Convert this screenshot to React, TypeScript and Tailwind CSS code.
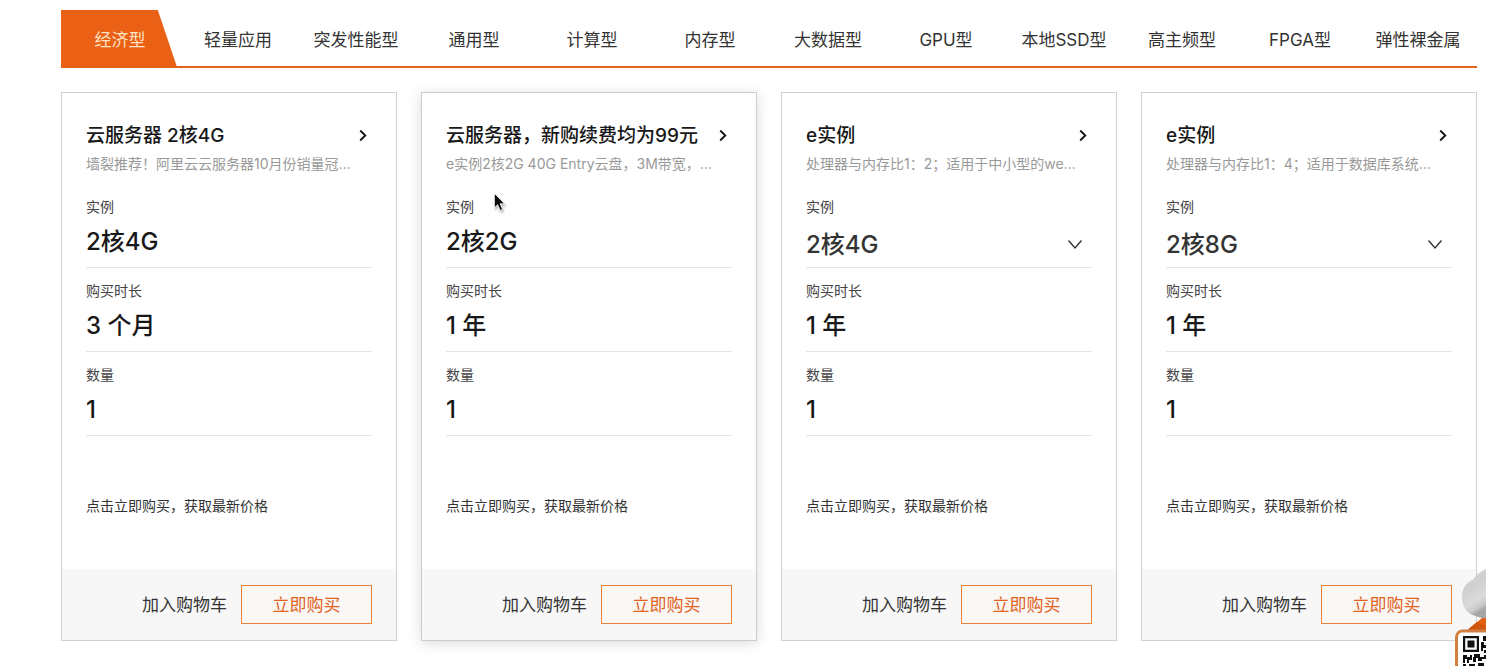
import React, { useId, useState } from "react";

const tabs = [
  "经济型",
  "轻量应用",
  "突发性能型",
  "通用型",
  "计算型",
  "内存型",
  "大数据型",
  "GPU型",
  "本地SSD型",
  "高主频型",
  "FPGA型",
  "弹性裸金属",
];

type Product = {
  title: string;
  desc: string;
  spec: string;
  selectable?: boolean;
  period: string;
  raised?: boolean;
};

const products: Product[] = [
  {
    title: "云服务器 2核4G",
    desc: "墙裂推荐！阿里云云服务器10月份销量冠…",
    spec: "2核4G",
    period: "3 个月",
  },
  {
    title: "云服务器，新购续费均为99元",
    desc: "e实例2核2G 40G Entry云盘，3M带宽，…",
    spec: "2核2G",
    period: "1 年",
    raised: true,
  },
  {
    title: "e实例",
    desc: "处理器与内存比1：2；适用于中小型的we…",
    spec: "2核4G",
    selectable: true,
    period: "1 年",
  },
  {
    title: "e实例",
    desc: "处理器与内存比1：4；适用于数据库系统…",
    spec: "2核8G",
    selectable: true,
    period: "1 年",
  },
];

function Tabs() {
  const [active, setActive] = useState(0);
  return (
    <nav className="grid h-[58px] grid-cols-12 border-b-2 border-[#e0631c]">
      {tabs.map((name, i) => (
        <button
          key={name}
          type="button"
          onClick={() => setActive(i)}
          className={
            i === active
              ? "whitespace-nowrap bg-[#ea6014] pt-[6px] text-[17px] text-[#ffe3c4] [clip-path:polygon(0_0,82%_0,98%_100%,0_100%)]"
              : "whitespace-nowrap pt-[6px] text-[17px] text-[#333]"
          }
        >
          {name}
        </button>
      ))}
    </nav>
  );
}

function Row({ label, value }: { label: string; value: string }) {
  return (
    <div className="border-b border-[#e3e4e6] pt-[13px] pb-[9px]">
      <dt className="text-sm leading-5 text-[#444]">{label}</dt>
      <dd className="mt-[9px] text-2xl leading-8 font-medium text-[#181818]">{value}</dd>
    </div>
  );
}

function SelectRow({ label, value }: { label: string; value: string }) {
  const id = useId();
  return (
    <div className="border-b border-[#e3e4e6] pt-[13px] pb-[6px]">
      <label htmlFor={id} className="block text-sm leading-5 text-[#444]">
        {label}
      </label>
      <div className="mt-3 grid items-center">
        <select
          id={id}
          defaultValue={value}
          className="col-start-1 row-start-1 h-8 w-full appearance-none bg-transparent text-2xl leading-8 font-medium text-[#333] outline-none"
        >
          <option>{value}</option>
        </select>
        <svg
          viewBox="0 0 16 12"
          className="pointer-events-none col-start-1 row-start-1 mr-[9px] h-3 w-4 justify-self-end"
          fill="none"
          stroke="#333"
          strokeWidth="1.4"
        >
          <path d="M1.5 1.500 8 9 14.5 1.500" />
        </svg>
      </div>
    </div>
  );
}

function Card({ product }: { product: Product }) {
  return (
    <article
      className={
        product.raised
          ? "flex min-w-0 flex-col border border-[#cbcdd4] bg-white shadow-[0_2px_12px_rgba(0,0,0,0.15)]"
          : "flex min-w-0 flex-col border border-[#cfd0d6] bg-white"
      }
    >
      <div className="px-6 pt-[29px]">
        <a href="#" className="flex items-center justify-between">
          <h3 className="truncate text-[19px] leading-7 font-medium text-[#181818]">
            {product.title}
          </h3>
          <svg
            viewBox="0 0 8 12"
            className="mr-[5px] h-3 w-2 shrink-0"
            fill="none"
            stroke="#181818"
            strokeWidth="1.9"
          >
            <path d="M1.2 0.500 6.3 5.500 1.2 10.500" />
          </svg>
        </a>
        <p className="mt-1 mb-[10px] truncate text-sm leading-5 text-[#999]">
          {product.desc}
        </p>
        <dl>
          {product.selectable ? (
            <SelectRow label="实例" value={product.spec} />
          ) : (
            <Row label="实例" value={product.spec} />
          )}
          <Row label="购买时长" value={product.period} />
          <Row label="数量" value="1" />
        </dl>
        <p className="mt-15 mb-[53px] text-sm leading-5 text-[#333]">
          点击立即购买，获取最新价格
        </p>
      </div>
      <footer className="flex items-center justify-end gap-[14px] bg-[#f7f7f7] px-6 py-4">
        <button type="button" className="pt-[2px] text-[17px] text-[#333]">
          加入购物车
        </button>
        <button
          type="button"
          className="h-[39px] w-[131px] border border-solid border-[#e8803a] bg-[#faf7f4] pt-[2px] text-[17px] text-[#e0641f]"
        >
          立即购买
        </button>
      </footer>
    </article>
  );
}

function Pointer() {
  return (
    <svg
      viewBox="0 0 16 24"
      className="pointer-events-none absolute top-[192px] left-[493px] h-[21px] w-[14px] drop-shadow-[1px_2px_1px_rgba(0,0,0,0.3)]"
    >
      <path
        d="M1.5 1.5V18.2L5.3 14.6 8.2 21.2 11 20 8.2 13.5H13.4Z"
        fill="#0a0a0a"
        stroke="#fff"
        strokeWidth="1"
      />
    </svg>
  );
}

function Helper() {
  return (
    <svg viewBox="0 0 34 100" className="fixed right-0 bottom-0 h-[100px] w-[34px]">
      <defs>
        <linearGradient id="cap" x1="0" y1="0" x2="0.3" y2="1">
          <stop offset="0" stopColor="#dedede" />
          <stop offset="0.4" stopColor="#cfcfcf" />
          <stop offset="0.75" stopColor="#dadada" />
          <stop offset="0.9" stopColor="#cacaca" />
          <stop offset="1" stopColor="#a6a6a6" />
        </linearGradient>
      </defs>
      <path d="M13 66 30 52 34 51V66Z" fill="#e2600f" />
      <path d="M13 66 25 56 34 60V66Z" fill="#cf560f" />
      <path
        d="M34 3C28 5.500 24 9 21 13.500 13.500 17 10 23 10 31 10 41 15 47 22 49.500 27 51.500 31 52.500 34 52Z"
        fill="url(#cap)"
      />
      <rect x="4.5" y="65" width="50" height="50" rx="6" fill="#fff" stroke="#d27f42" strokeWidth="3" />
      <g fill="#111">
        <path fillRule="evenodd" d="M11 70H27V86H11ZM13.2 72.2V83.800H24.800V72.200Z" />
        <path d="M15.500 74.500H22.500V81.500H15.500Z" />
        <path d="M31 70H34V75H31ZM29 76H32V79H34V82H31V85H29ZM32 84H34V87H32Z" />
        <path d="M11 89H15V91H18V89H20V94H17V97H15V93H13V97H11ZM22 88H28V91H32V89H34V93H30V95H26V92H24V96H21V91H22ZM11 98H14V100H11ZM17 98H23V100H17ZM26 97H32V100H26Z" />
      </g>
    </svg>
  );
}

export default function App() {
  return (
    <main className="relative min-h-screen bg-white pt-[10px] pr-[9px] pb-6 pl-[61px] font-['Inter','Noto_Sans_CJK_SC',sans-serif]">
      <Tabs />
      <section className="mt-6 grid grid-cols-4 gap-6">
        {products.map((p, i) => (
          <Card key={i} product={p} />
        ))}
      </section>
      <Pointer />
      <Helper />
    </main>
  );
}
